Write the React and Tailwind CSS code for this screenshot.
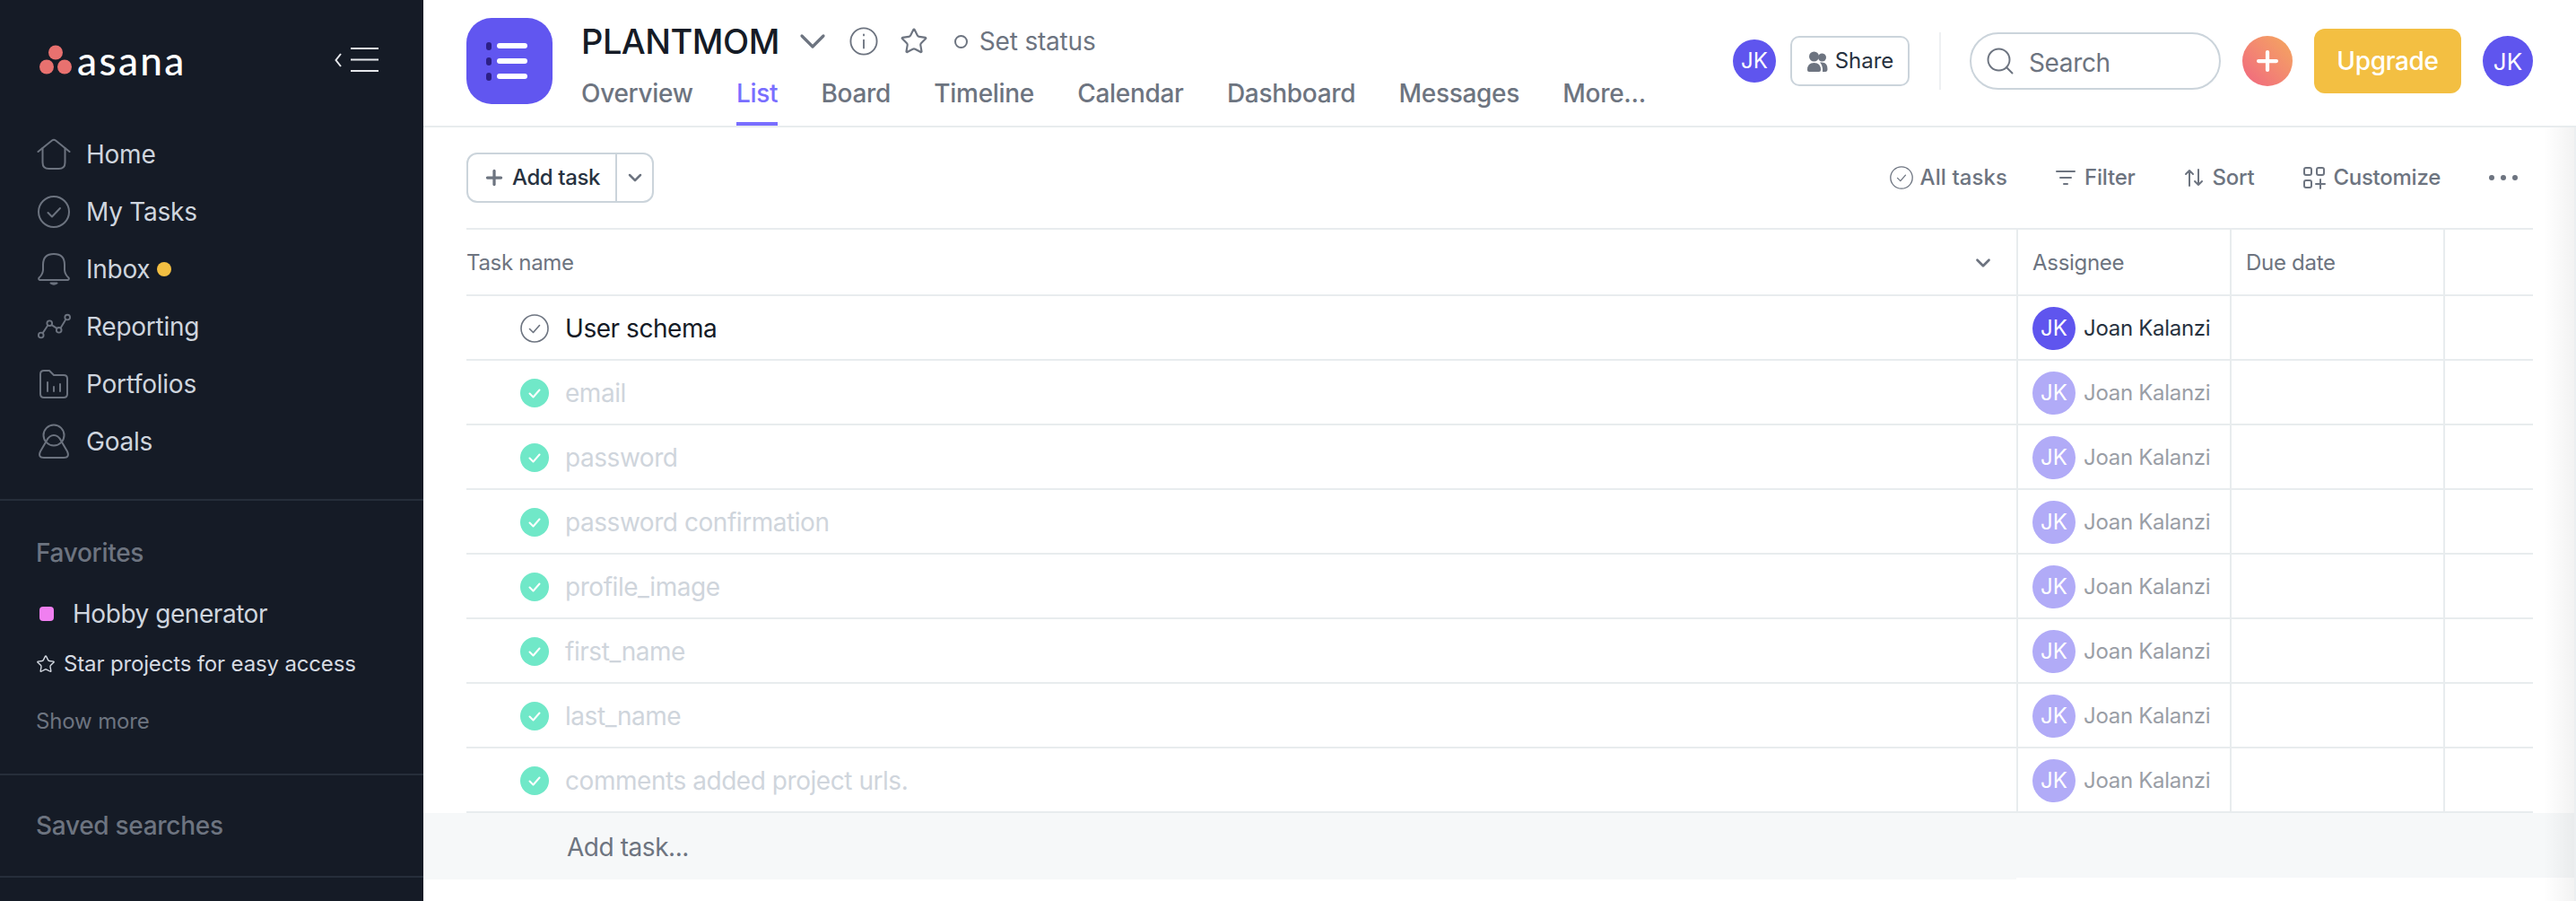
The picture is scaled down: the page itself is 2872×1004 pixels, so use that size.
import { Plus, ChevronDown, Search, Star } from "lucide-react";

/* ─── Icons ─── */
const stroke = { fill: "none", stroke: "currentColor", strokeWidth: 2, strokeLinecap: "round", strokeLinejoin: "round" };

const HomeIcon = () => (
  <svg width="38" height="36" viewBox="0 0 38 36" {...stroke}>
    <path d="M1.5 15 L17 2.5 Q19 1 21 2.5 L36.5 15" />
    <path d="M6.5 11 V27 Q6.5 34 13.5 34 H24.5 Q31.5 34 31.5 27 V11" />
  </svg>
);

const TasksIcon = () => (
  <svg width="38" height="38" viewBox="0 0 38 38" {...stroke}>
    <circle cx="19" cy="19" r="17" />
    <path d="M12.5 20 L17 24.5 L26 15" />
  </svg>
);

const BellIcon = () => (
  <svg width="38" height="38" viewBox="0 0 38 38" {...stroke}>
    <path d="M7 20 V14 Q7 2 19 2 Q31 2 31 14 V20 Q31.5 25 35.5 28.5 Q36.5 30.5 34.5 31 H3.5 Q1.5 30.5 2.5 28.5 Q6.5 25 7 20 Z" />
    <path d="M15.5 34.5 Q19 37 22.5 34.5 Z" />
  </svg>
);

const ReportingIcon = () => (
  <svg width="40" height="30" viewBox="0 0 40 30" {...stroke}>
    <circle cx="5" cy="25" r="3" />
    <circle cx="15" cy="11" r="3" />
    <circle cx="26" cy="19" r="3" />
    <circle cx="36" cy="4" r="3" />
    <path d="M7 22.5 L13 13.5 M17.5 13 L23.5 17 M28 16.5 L34 6.5" />
  </svg>
);

const PortfolioIcon = () => (
  <svg width="34" height="34" viewBox="0 0 34 34" {...stroke}>
    <path d="M2 6 Q2 2 6 2 H12 L17 7 H28 Q32 7 32 11 V28 Q32 32 28 32 H6 Q2 32 2 28 Z" />
    <path d="M10 15 V25 M17 20 V25 M24 17 V25" />
  </svg>
);

const GoalsIcon = () => (
  <svg width="36" height="40" viewBox="0 0 36 40" {...stroke}>
    <circle cx="18" cy="13" r="11.5" />
    <path d="M18 13 Q13 13 10 19 L3 31 Q0 38 7 38 H29 Q36 38 33 31 L26 19 Q23 13 18 13 Z" />
  </svg>
);

const CheckCircle = ({ size = 32, className = "" }) => (
  <svg width={size} height={size} viewBox="0 0 32 32" className={className} fill="none" stroke="currentColor" strokeWidth="1.6" strokeLinecap="round" strokeLinejoin="round">
    <circle cx="16" cy="16" r="15" />
    <path d="M10.5 16.5 L14.5 20.5 L21.5 12.5" />
  </svg>
);

const DoneCircle = () => (
  <svg width="32" height="32" viewBox="0 0 32 32" className="shrink-0">
    <circle cx="16" cy="16" r="16" fill="#70e8c8" />
    <path d="M10.5 16.5 L14.5 20.5 L21.5 12.5" fill="none" stroke="#fff" strokeWidth="2" strokeLinecap="round" strokeLinejoin="round" />
  </svg>
);

/* ─── Small pieces ─── */
const Avatar = ({ size = "w-[48px] h-[48px] text-[24px]", faded = false }) => (
  <div className={`${size} ${faded ? "bg-[#b1abf7]" : "bg-[#5f55ee]"} rounded-full shrink-0 flex items-center justify-center text-white`}>
    JK
  </div>
);

const navItems = [
  { label: "Home", icon: <HomeIcon /> },
  { label: "My Tasks", icon: <TasksIcon /> },
  { label: "Inbox", icon: <BellIcon />, dot: true },
  { label: "Reporting", icon: <ReportingIcon /> },
  { label: "Portfolios", icon: <PortfolioIcon /> },
  { label: "Goals", icon: <GoalsIcon /> },
];

const tabs = ["Overview", "List", "Board", "Timeline", "Calendar", "Dashboard", "Messages", "More..."];

const doneTasks = ["email", "password", "password confirmation", "profile_image", "first_name", "last_name", "comments added project urls."];

const Sidebar = () => (
  <aside className="w-[472px] h-full shrink-0 bg-[#151b26] flex flex-col">
    <div className="h-[140px] flex items-center pl-[44px] pr-[49px] pb-[6px]">
      <svg width="36" height="34" viewBox="0 0 36 34" className="shrink-0">
        <circle cx="18" cy="8.5" r="8" fill="#e8716f" />
        <circle cx="8" cy="24.5" r="8" fill="#e8716f" />
        <circle cx="28" cy="24.5" r="8" fill="#e8716f" />
      </svg>
      <span className="ml-[6px] text-white text-[44px] leading-none font-medium tracking-[2.4px] font-[Lato,sans-serif]">asana</span>
      <svg width="50" height="30" viewBox="0 0 50 30" className="ml-auto text-[#e6e8ec]" fill="none" stroke="currentColor" strokeWidth="2">
        <path d="M7 8 L1.5 15 L7 22" />
        <path d="M18 2 H49 M18 14.5 H49 M18 27 H49" />
      </svg>
    </div>

    <nav className="flex flex-col pb-[32px] border-b-2 border-[#262e3a]">
      {navItems.map((item) => (
        <div key={item.label} className="h-[64px] flex items-center pl-[41px]">
          <div className="w-[38px] flex justify-center text-[#6c737f]">{item.icon}</div>
          <span className="ml-[17px] text-[28px] tracking-[-0.25px] text-[#cfd5de]">{item.label}</span>
          {item.dot && <span className="ml-[8px] w-[16px] h-[16px] rounded-full bg-[#f3bf42]" />}
        </div>
      ))}
    </nav>

    <section className="h-[306px] shrink-0 flex flex-col border-b-2 border-[#262e3a] pl-[40px]">
      <div className="mt-[38px] h-[40px] flex items-center text-[28px] font-medium tracking-[-0.3px] text-[#6d7480]">Favorites</div>
      <div className="mt-[28px] h-[40px] flex items-center pl-[4px]">
        <span className="w-[16px] h-[16px] rounded-[4px] bg-[#f07ff0]" />
        <span className="ml-[21px] text-[28px] tracking-[-0.45px] text-[#cfd5de]">Hobby generator</span>
      </div>
      <div className="mt-[16px] h-[40px] flex items-center text-[#d5dae2]">
        <Star size={22} strokeWidth={1.5} />
        <span className="ml-[9px] text-[24px] tracking-[-0.15px]">Star projects for easy access</span>
      </div>
      <div className="mt-[24px] h-[40px] flex items-center text-[24px] tracking-[-0.15px] text-[#6d7480]">Show more</div>
    </section>

    <section className="h-[114px] shrink-0 flex items-center pl-[40px] border-b-2 border-[#262e3a]">
      <span className="text-[28px] font-medium tracking-[-0.3px] text-[#6d7480]">Saved searches</span>
    </section>
  </aside>
);

const Header = () => (
  <header className="h-[142px] shrink-0 flex items-start px-[48px] border-b-2 border-[#e8ecee]">
    <div className="mt-[20px] w-[96px] h-[96px] rounded-[28px] bg-[#6156f0] flex flex-col justify-center gap-[8px] pl-[22px] shrink-0">
      {[0, 1, 2].map((i) => (
        <div key={i} className="flex items-center gap-[6px]">
          <span className="w-[6px] h-[9px] rounded-full bg-[#2c1f86]" />
          <span className="w-[34px] h-[6px] rounded-full bg-white" />
        </div>
      ))}
    </div>

    <div className="ml-[32px] flex flex-col">
      <div className="mt-[20px] h-[52px] flex items-center">
        <span className="text-[38px] font-medium tracking-[-0.5px] text-[#151b26] leading-none">PLANTMOM</span>
        <ChevronDown size={48} strokeWidth={1.6} className="ml-[13px] text-[#6d7480]" />
        <svg width="32" height="32" viewBox="0 0 34 34" className="ml-[17px] text-[#6d7480]" fill="none" stroke="currentColor" strokeWidth="2" strokeLinecap="round">
          <circle cx="17" cy="17" r="15.5" />
          <path d="M17 15.5 V25 M17 9 V10" />
        </svg>
        <Star size={32} strokeWidth={1.6} className="ml-[24px] text-[#6d7480]" />
        <span className="ml-[29px] w-[15px] h-[15px] rounded-full border-2 border-[#6d7480]" />
        <span className="ml-[13px] text-[28px] tracking-[-0.2px] text-[#6d7480]">Set status</span>
      </div>
      <div className="mt-[4px] flex gap-[48.25px]">
        {tabs.map((tab) => (
          <div key={tab} className={`h-[64px] pt-[10px] border-b-4 text-[28px] leading-[36px] font-medium tracking-[-0.3px] ${tab === "List" ? "border-[#796eff] text-[#796eff]" : "border-transparent text-[#6d7480]"}`}>
            {tab}
          </div>
        ))}
      </div>
    </div>

    <div className="ml-auto h-[136px] flex items-center">
      <Avatar />
      <div className="ml-[16px] w-[133px] h-[56px] rounded-[10px] border-2 border-[#cbd4db] flex items-center justify-center gap-[8px] text-[24px] text-[#273240]">
        <svg width="24" height="24" viewBox="0 0 24 24" className="text-[#6d7480]" fill="currentColor">
          <circle cx="8.5" cy="7" r="5.5" />
          <circle cx="17.5" cy="8" r="4.5" />
          <path d="M1 22 Q1 14 8.5 14 Q16 14 16 22 Q16 24 14 24 H3 Q1 24 1 22 Z" />
          <path d="M18 24 Q18.5 17 15 13.5 Q23.5 12.5 23.5 21 Q23.5 24 21 24 Z" />
        </svg>
        Share
      </div>
      <div className="ml-[33px] w-[2px] h-[64px] bg-[#eef0f2]" />
      <div className="ml-[32px] w-[280px] h-[64px] rounded-full border-2 border-[#cbd4db] flex items-center pl-[14px] text-[28px] text-[#6d7480]">
        <Search size={36} strokeWidth={1.3} />
        <span className="ml-[14px] pt-[4px] tracking-[-0.35px]">Search</span>
      </div>
      <div className="ml-[24px] w-[56px] h-[56px] rounded-full bg-gradient-to-tr from-[#f0647f] to-[#f4a85c] flex items-center justify-center text-white">
        <Plus size={34} strokeWidth={3} />
      </div>
      <div className="ml-[24px] w-[164px] h-[72px] rounded-[12px] bg-[#f3bf42] flex items-center justify-center text-[28px] font-medium tracking-[-0.35px] text-white">
        Upgrade
      </div>
      <Avatar size="ml-[24px] w-[56px] h-[56px] text-[26px]" />
    </div>
  </header>
);

const Toolbar = () => (
  <div className="h-[112px] shrink-0 flex items-center pl-[48px] pr-[65px] text-[24px] font-medium tracking-[-0.25px] text-[#6d7480]">
    <div className="h-[56px] w-[209px] flex rounded-[12px] border-2 border-[#cbd4db] text-[#273240]">
      <div className="w-[166px] flex items-center pl-[16px] gap-[7px] border-r-2 border-[#cbd4db] tracking-[-0.4px]">
        <Plus size={26} strokeWidth={3} className="text-[#6d7480]" />
        Add task
      </div>
      <div className="flex-1 flex items-center justify-center">
        <ChevronDown size={24} strokeWidth={2.5} className="text-[#6d7480]" />
      </div>
    </div>

    <div className="ml-auto flex items-center">
      <CheckCircle size={26} />
      <span className="ml-[8px] tracking-[0.1px]">All tasks</span>
      <svg width="22" height="22" viewBox="0 0 22 22" className="ml-[54px]" fill="none" stroke="currentColor" strokeWidth="2" strokeLinecap="round">
        <path d="M1 4 H21 M5 11 H17 M9 18 H13" />
      </svg>
      <span className="ml-[10px]">Filter</span>
      <svg width="22" height="22" viewBox="0 0 22 22" className="ml-[54px]" fill="none" stroke="currentColor" strokeWidth="2" strokeLinecap="round" strokeLinejoin="round">
        <path d="M6 20 V3 M2 7 L6 3 L10 7 M16 2 V19 M12 15 L16 19 L20 15" />
      </svg>
      <span className="ml-[10px]">Sort</span>
      <svg width="26" height="26" viewBox="0 0 26 26" className="ml-[54px]" fill="none" stroke="currentColor" strokeWidth="2" strokeLinecap="round">
        <rect x="2" y="2" width="8" height="8" rx="2" />
        <rect x="16" y="2" width="8" height="8" rx="2" />
        <rect x="2" y="16" width="8" height="8" rx="2" />
        <path d="M20 15 V25 M15 20 H25" />
      </svg>
      <span className="ml-[8px]">Customize</span>
      <div className="ml-[54px] flex gap-[7px]">
        <span className="w-[6px] h-[6px] rounded-full bg-[#6d7480]" />
        <span className="w-[6px] h-[6px] rounded-full bg-[#6d7480]" />
        <span className="w-[6px] h-[6px] rounded-full bg-[#6d7480]" />
      </div>
    </div>
  </div>
);

const Row = ({ name, done }) => (
  <div className="h-[72px] grid grid-cols-[1730px_238px_238px_1fr] border-b-2 border-[#e8ecee]">
    <div className="flex items-center pl-[60px] pt-[2px] gap-[18px] border-r-2 border-[#e8ecee]">
      {done ? <DoneCircle /> : <CheckCircle className="shrink-0 text-[#6d7480]" />}
      <span className={`text-[28px] tracking-[-0.45px] ${done ? "text-[#cfd5dc]" : "text-[#151b26]"}`}>{name}</span>
    </div>
    <div className="flex items-center pl-[16px] pt-[2px] gap-[9px] border-r-2 border-[#e8ecee]">
      <Avatar faded={done} />
      <span className={`text-[24px] tracking-[-0.3px] ${done ? "text-[#9a9ea6]" : "text-[#273240]"}`}>Joan Kalanzi</span>
    </div>
    <div className="border-r-2 border-[#e8ecee]" />
    <div />
  </div>
);

const TaskTable = () => (
  <div className="mx-[48px] border-t-2 border-[#e8ecee]">
    <div className="h-[74px] grid grid-cols-[1730px_238px_238px_1fr] border-b-2 border-[#e8ecee] text-[24px] tracking-[-0.3px] text-[#6d7480]">
      <div className="flex items-center justify-between pt-[2px] pr-[24px] border-r-2 border-[#e8ecee]">
        Task name
        <ChevronDown size={26} strokeWidth={2.5} />
      </div>
      <div className="flex items-center pl-[16px] pt-[2px] border-r-2 border-[#e8ecee]">Assignee</div>
      <div className="flex items-center pl-[16px] pt-[2px] border-r-2 border-[#e8ecee]">Due date</div>
      <div />
    </div>
    <Row name="User schema" />
    {doneTasks.map((name) => (
      <Row key={name} name={name} done />
    ))}
  </div>
);

export default function App() {
  return (
    <div className="relative w-[2872px] h-[1004px] overflow-hidden flex bg-white font-[Inter,sans-serif]">
      <Sidebar />
      <main className="flex-1 flex flex-col min-w-0">
        <Header />
        <Toolbar />
        <TaskTable />
        <div className="flex items-start">
          <div className="w-[1776px] h-[74px] bg-[#f6f8f9] flex items-center pl-[160px] pt-[2px] text-[28px] tracking-[-0.45px] text-[#6d7480]">Add task...</div>
          <div className="flex-1 h-[72px] bg-[#f6f8f9]" />
        </div>
      </main>
      {/* scroll shadow on the right edge */}
      <div className="absolute right-0 top-[142px] bottom-0 w-[36px] border-r-2 border-[#eceff1] bg-gradient-to-l from-black/5 to-transparent pointer-events-none" />
    </div>
  );
}
